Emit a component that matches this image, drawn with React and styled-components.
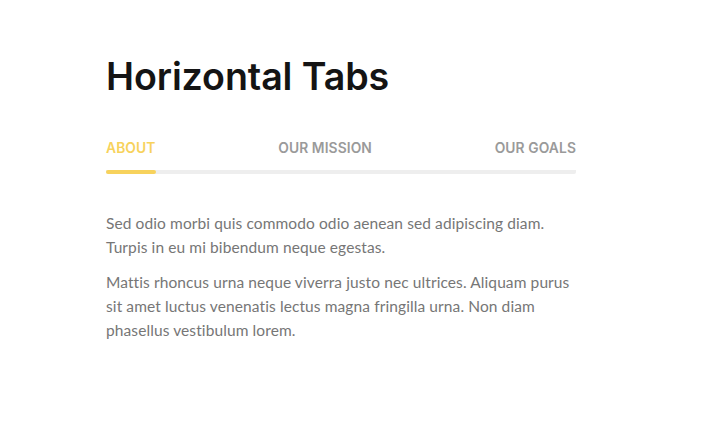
import React, { useState } from 'react';
import styled, { createGlobalStyle } from 'styled-components';

const GlobalStyle = createGlobalStyle`
  body {
    margin: 0;
    background: #fff;
  }
`

const Page = styled.div`
  padding: 54px 0 0 106px;
  width: 470px;
`

const Title = styled.h1`
  margin: 0;
  font-family: Inter, "Open Sans", sans-serif;
  font-weight: 600;
  font-size: 37.6px;
  line-height: 46px;
  letter-spacing: -0.1px;
  color: #141414;
`

const TabBar = styled.div`
  margin-top: 39px;
  display: flex;
  justify-content: space-between;
  border-bottom: 4px solid #eeeeee;
  border-radius: 2px;
`

const Tab = styled.button`
  position: relative;
  background: none;
  border: none;
  padding: 0 0 13px;
  font-family: Inter, "Open Sans", sans-serif;
  font-weight: 600;
  font-size: 13.8px;
  line-height: 18px;
  letter-spacing: 0.1px;
  text-transform: uppercase;
  color: ${props => props.active ? '#f7d25c' : '#9a9a9a'};
  cursor: pointer;

  &::after {
    content: '';
    display: ${props => props.active ? 'block' : 'none'};
    position: absolute;
    left: 0;
    right: 0;
    bottom: -4px;
    height: 4px;
    border-radius: 2px;
    background: #f7d25c;
  }
`

const Content = styled.div`
  margin-top: 37px;
  width: 474px;
`

const Para = styled.p`
  margin: 0 0 11px;
  font-family: Lato, "Open Sans", sans-serif;
  font-size: 15.5px;
  line-height: 24px;
  letter-spacing: 0.1px;
  font-variant-ligatures: none;
  color: #767676;
`

const tabs = [
  {
    label: 'About',
    text: [
      'Sed odio morbi quis commodo odio aenean sed adipiscing diam. Turpis in eu mi bibendum neque egestas.',
      'Mattis rhoncus urna neque viverra justo nec ultrices. Aliquam purus sit amet luctus venenatis lectus magna fringilla urna. Non diam phasellus vestibulum lorem.'
    ]
  },
  { label: 'Our Mission', text: ['Sed odio morbi quis commodo odio aenean sed adipiscing diam.'] },
  { label: 'Our Goals', text: ['Turpis in eu mi bibendum neque egestas.'] }
]

export default function App() {
  const [active, setActive] = useState(0)
  return (
    <>
      <GlobalStyle />
      <Page>
        <Title>Horizontal Tabs</Title>
        <TabBar>
          {tabs.map((tab, i) => (
            <Tab key={i} active={i === active} onClick={() => setActive(i)}>
              {tab.label}
            </Tab>
          ))}
        </TabBar>
        <Content>
          {tabs[active].text.map((t, i) => <Para key={i}>{t}</Para>)}
        </Content>
      </Page>
    </>
  )
}
